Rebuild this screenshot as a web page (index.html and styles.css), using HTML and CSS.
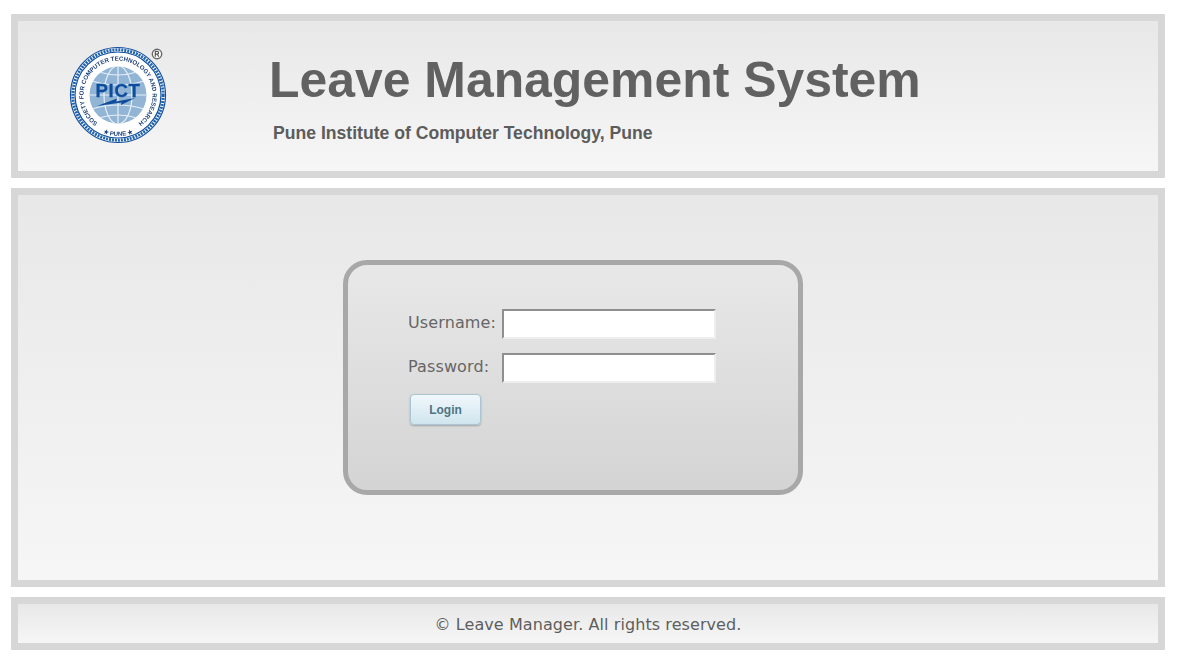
FILE: index.html
```html
<!DOCTYPE html>
<html lang="en">
<head>
<meta charset="utf-8">
<title>Leave Management System</title>
<link rel="stylesheet" href="styles.css">
</head>
<body>
<header class="panel header">
  <div class="logo">
    <svg class="seal" viewBox="0 0 104 104" width="104" height="104" aria-label="PICT logo">
      <defs>
        <path id="arcTop" d="M37.4 83.3 A34.5 34.5 0 1 1 66.6 83.3"/>
        <path id="arcBottom" d="M25.6 83.4 A41 41 0 0 0 78.4 83.4"/>
        <clipPath id="globeClip"><circle cx="52" cy="52" r="28.5"/></clipPath>
      </defs>
      <circle cx="52" cy="52" r="47.5" fill="#fff" stroke="#14509c" stroke-width="1.2"/>
      <circle cx="52" cy="52" r="45.2" fill="none" stroke="#1f62ad" stroke-width="3" stroke-dasharray="2 1"/>
      <circle cx="52" cy="52" r="43" fill="none" stroke="#0d4d9c" stroke-width="1.2"/>
      <text class="logo-ring"><textPath href="#arcTop" startOffset="50%" text-anchor="middle">SOCIETY FOR COMPUTER TECHNOLOGY AND RESEARCH</textPath></text>
      <text class="logo-ring"><textPath href="#arcBottom" startOffset="50%" text-anchor="middle">★ PUNE ★</textPath></text>
      <circle cx="52" cy="52" r="28.5" fill="#92b5d6"/>
      <g clip-path="url(#globeClip)" fill="none" stroke="#e6eff7" stroke-width="1.2">
        <ellipse cx="52" cy="52" rx="14" ry="29"/>
        <line x1="52" y1="23" x2="52" y2="81"/>
        <line x1="23" y1="52" x2="81" y2="52"/>
        <path d="M26 38 q26 8 52 0"/>
        <path d="M26 66 q26 -8 52 0"/>
        <path d="M33 29 q19 6 38 0"/>
        <path d="M33 75 q19 -6 38 0"/>
      </g>
      <text class="logo-pict" x="52" y="53.7" text-anchor="middle">PICT</text>
      <path d="M31 63 L51 55.5 L50 58.5 L69 55 L55 62 L55.5 59.5 Z" fill="#0d4d9c"/>
    </svg>
    <svg class="reg" viewBox="0 0 12 12" width="12" height="12" aria-hidden="true">
      <circle cx="6" cy="6" r="4.7" fill="#fff" stroke="#666" stroke-width="1.4"/>
      <path d="M4.3 8.7V3.4h1.9a1.3 1.3 0 0 1 0 2.8H4.3M6.3 6.2l1.5 2.5" fill="none" stroke="#555" stroke-width="1.2"/>
    </svg>
  </div>
  <div class="titles">
    <h1 class="title">Leave Management System</h1>
    <p class="subtitle">Pune Institute of Computer Technology, Pune</p>
  </div>
</header>
<main class="panel content">
  <form class="login-box">
    <div class="field">
      <label class="field-label" for="username">Username:</label>
      <input class="field-input" id="username" type="text">
    </div>
    <div class="field">
      <label class="field-label" for="password">Password:</label>
      <input class="field-input" id="password" type="password">
    </div>
    <button class="login-btn" type="button">Login</button>
  </form>
</main>
<footer class="panel footer">© Leave Manager. All rights reserved.</footer>
</body>
</html>
```
FILE: styles.css
```css
* { box-sizing: border-box; }
html, body { height: 100%; }
body {
  margin: 0;
  padding: 14px 13px 11px 11px;
  background: #fff;
  font-family: "DejaVu Sans", Verdana, sans-serif;
  color: #5e5e5e;
  display: flex;
  flex-direction: column;
  gap: 10px;
  overflow: hidden;
}
.panel {
  border: 7px solid #d7d7d7;
  background: linear-gradient(#e8e8e8, #f6f6f6);
}
.header {
  height: 164px;
  flex: none;
  display: flex;
}
.logo {
  position: relative;
  flex: none;
  width: 251px;
  padding: 22px 0 0 48px;
}
.seal { display: block; filter: blur(.35px); }
.reg { position: absolute; left: 133px; top: 27px; filter: blur(.25px); }
.logo-ring { font: bold 6.1px "Liberation Sans", Arial, sans-serif; fill: #1b3f78; }
.logo-pict { font: bold 18.5px "Liberation Sans", Arial, sans-serif; letter-spacing: .7px; fill: #0d4d9c; stroke: #0d4d9c; stroke-width: .3px; }
.titles { padding-top: 28px; }
.title {
  margin: 0;
  font: bold 49.9px/62px "Liberation Sans", Arial, sans-serif;
  color: #616161;
}
.subtitle {
  margin: 10px 0 0 4px;
  font: bold 17.6px/24px "Liberation Sans", Arial, sans-serif;
  color: #5c5c5c;
}
.content {
  height: 399px;
  flex: none;
  padding-top: 65px;
  padding-left: 325px;
}
.login-box {
  width: 460px;
  height: 235px;
  border: 5px solid #a8a8a8;
  border-radius: 24px;
  background: linear-gradient(#e8e8e8, #d4d4d4);
  padding: 44px 0 0 60px;
}
.field {
  display: flex;
  align-items: center;
  height: 30px;
  margin-bottom: 14px;
}
.field-label {
  width: 94px;
  font-size: 16px;
  letter-spacing: .12px;
  line-height: 26px;
  padding-bottom: 3px;
  color: #666;
}
.field-input {
  width: 214px;
  height: 30px;
  padding: 0;
  background: #fff;
  border: 2px solid;
  border-color: #8f8f8f #eee #eee #8f8f8f;
  outline: none;
}
.login-btn {
  display: block;
  width: 71px;
  height: 31px;
  margin: -3px 0 0 2px;
  border: 1px solid #a9c6d2;
  border-radius: 4px;
  background: linear-gradient(#f1f8fb, #cfe5ee);
  box-shadow: 0 1px 2px rgba(0,0,0,.25);
  font: bold 12px "Liberation Sans", Arial, sans-serif;
  color: #4f7483;
  padding: 0;
}
.footer {
  height: 53px;
  flex: none;
  display: flex;
  align-items: center;
  justify-content: center;
  font-size: 16px;
  letter-spacing: .08px;
  color: #5e5e5e;
  padding-top: 1px;
}
```
